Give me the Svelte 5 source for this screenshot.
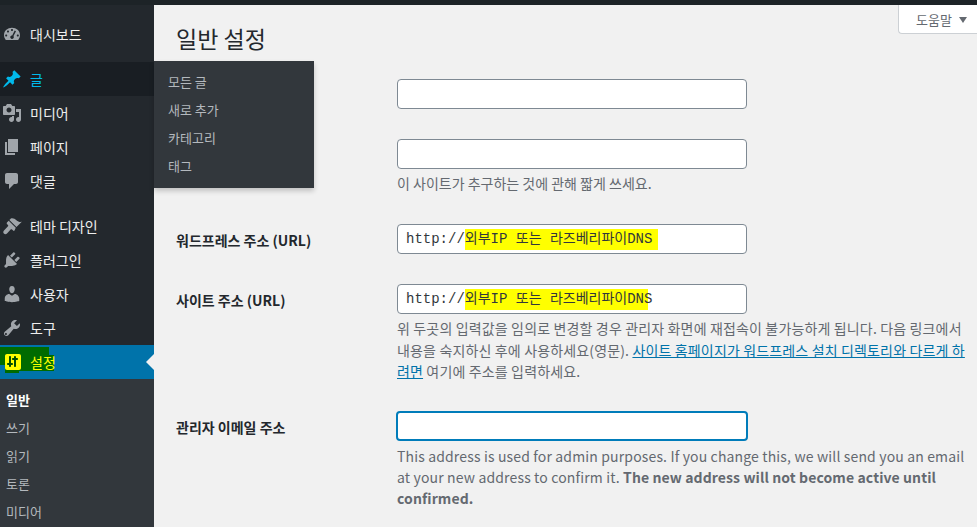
<script>
    const topMenu = [
        { label: "대시보드", icon: "dash" },
        { label: "글", icon: "pin", current: true },
        { label: "미디어", icon: "media" },
        { label: "페이지", icon: "page" },
        { label: "댓글", icon: "comment" },
        { label: "테마 디자인", icon: "brush", gap: true },
        { label: "플러그인", icon: "plug" },
        { label: "사용자", icon: "user" },
        { label: "도구", icon: "tool" }
    ];
    const paths = {
        dash: "M3.800 16h12.400c1.100-1.300 1.800-3 1.800-4.900 0-4.300-3.600-7.300-8-7.300s-8 3-8 7.300c0 1.900.7 3.600 1.800 4.900zM10 5c.6 0 1 .4 1 1s-.4 1-1 1-1-.4-1-1 .4-1 1-1zM6 6.500c.6 0 1 .4 1 1s-.4 1-1 1-1-.4-1-1 .4-1 1-1zM4.200 10.500c.6 0 1 .4 1 1s-.4 1-1 1-1-.4-1-1 .4-1 1-1zM15.800 10.500c.6 0 1 .4 1 1s-.4 1-1 1-1-.4-1-1 .4-1 1-1zM12.700 6.600l1.300.7-2.500 4.800c.3.400.4.900.3 1.400-.2 1-1.100 1.600-2.100 1.400-1-.2-1.600-1.100-1.400-2.100.2-.9 1-1.500 1.900-1.400z",
        pin: "M10.440 3.020l1.820-1.820 6.360 6.350-1.830 1.820c-1.050-.68-2.480-.57-3.410.36l-.75.75c-.92.93-1.040 2.350-.35 3.410l-1.830 1.820-2.410-2.410-2.800 2.790c-.42.42-3.380 2.710-3.800 2.290s1.860-3.390 2.280-3.810l2.790-2.790L4.100 9.360l1.830-1.820c1.050.69 2.480.57 3.400-.36l.75-.75c.93-.92 1.050-2.350.36-3.410z",
        media: "M13 11V4c0-.55-.45-1-1-1h-1.670L9 1H5L3.670 3H2c-.55 0-1 .45-1 1v7c0 .55.45 1 1 1h10c.55 0 1-.45 1-1zM7 4.500c1.380 0 2.500 1.120 2.500 2.500S8.380 9.500 7 9.500 4.500 8.380 4.500 7 5.620 4.500 7 4.500zM14 6h5v10.500c0 1.380-1.120 2.500-2.500 2.500S14 17.880 14 16.500s1.120-2.500 2.500-2.500c.17 0 .34.020.5.050V9h-3V6zm-4 8.050V13h2v3.500c0 1.380-1.120 2.500-2.500 2.500S7 17.880 7 16.500 8.120 14 9.500 14c.17 0 .34.020.5.050z",
        page: "M6 15V2h10v13H6zm-1 1h8v2H3V5h2v11z",
        comment: "M5 2h9c1.100 0 2 .9 2 2v7c0 1.100-.9 2-2 2h-2l-5 5v-5H5c-1.100 0-2-.9-2-2V4c0-1.100.9-2 2-2z",
        brush: "M14.480 11.060L7.410 3.990l1.500-1.500c.5-.56 2.300-.47 3.510.32 1.210.8 1.430 1.280 2.910 2.100 1.180.64 2.450 1.260 4.450.85zM13.770 11.770L6.700 4.700 4.930 6.470c-.39.39-.39 1.020 0 1.410l1.060 1.060c.39.39.39 1.030 0 1.420L2 14.500c-.9.9-.9 2.300-.1 3.100.8.8 2.200.8 3.100-.1l3.640-3.970c.39-.39 1.030-.39 1.420 0l1.060 1.060c.39.39 1.020.39 1.410 0z",
        plug: "M13.110 4.360L9.870 7.600 8 5.730l3.240-3.240c.35-.34 1.050-.2 1.560.32.52.51.66 1.210.31 1.550zm-8 1.770l.91-1.120 9.010 9.010-1.190.84c-.71.71-2.630 1.160-3.820 1.160H6.140L4.900 17.260c-.59.59-1.540.59-2.120 0-.59-.58-.59-1.530 0-2.120l1.240-1.240v-3.880c0-1.130.4-3.190 1.090-3.890zm7.260 3.970l3.240-3.240c.34-.35 1.040-.21 1.550.31.52.51.66 1.210.31 1.550l-3.240 3.250z",
        user: "M10 9.250c-2.270 0-2.730-3.440-2.730-3.440C7 4.020 7.820 2 9.970 2c2.160 0 2.980 2.020 2.710 3.810 0 0-.41 3.440-2.680 3.440zm0 2.570L12.720 10c2.390 0 4.520 2.330 4.520 4.530v2.490s-3.650 1.130-7.240 1.130c-3.650 0-7.240-1.130-7.240-1.130v-2.490c0-2.250 1.940-4.480 4.470-4.480z",
        tool: "M16.680 9.770c-1.340 1.340-3.300 1.670-4.950.99l-5.410 6.520c-.99.99-2.590.99-3.570 0-.99-.98-.99-2.580 0-3.570l6.520-5.420c-.68-1.650-.35-3.610.99-4.950 1.280-1.280 3.120-1.620 4.720-1.060l-2.890 2.890 2.820 2.820 2.860-2.860c.53 1.580.18 3.400-1.090 4.640zM4.660 15.340c-.39-.39-1.030-.39-1.420 0s-.39 1.030 0 1.420 1.030.39 1.420 0 .39-1.030 0-1.420z"
    };
    const settings = "M18 16V4c0-1.100-.9-2-2-2H4c-1.100 0-2 .9-2 2v12c0 1.100.9 2 2 2h12c1.100 0 2-.9 2-2zM8 11h1c.55 0 1 .45 1 1s-.45 1-1 1H8v1c0 .55-.45 1-1 1s-1-.45-1-1v-1H5c-.55 0-1-.45-1-1s.45-1 1-1h1V5c0-.55.45-1 1-1s1 .45 1 1v6zm7-4c0-.55-.45-1-1-1h-1V5c0-.55-.45-1-1-1s-1 .45-1 1v1h-1c-.55 0-1 .45-1 1s.45 1 1 1h1v6c0 .55.45 1 1 1s1-.45 1-1V8h1c.55 0 1-.45 1-1z";
    const submenu = ["일반", "쓰기", "읽기", "토론", "미디어"];
    const flyout = ["모든 글", "새로 추가", "카테고리", "태그"];
</script>

<div class="page">
    <div class="topbar"></div>
    <div class="main">
        <nav class="side">
            <ul class="menu">
                {#each topMenu as item}
                    <li class="item" class:current={item.current} class:gap={item.gap}>
                        <svg class="ico" viewBox="0 0 20 20"><path d={paths[item.icon]} fill-rule="evenodd" /></svg>
                        <span>{item.label}</span>
                    </li>
                {/each}
                <li class="item active">
                    <!-- painted-over marker from the screenshot -->
                    <svg class="blob" viewBox="0 0 54 30"><path d="M0 2h49v8h5v16H19v2H5v-8H0z" /></svg>
                    <svg class="ico" viewBox="0 0 20 20"><rect x="3" y="3" width="14" height="14" fill="#004d00" /><path d={settings} fill-rule="evenodd" /></svg>
                    <span class="sel">설정</span>
                    <i class="arrow"></i>
                </li>
            </ul>
            <ul class="sub">
                {#each submenu as s, i}
                    <li class:on={i === 0}>{s}</li>
                {/each}
            </ul>
            <ul class="flyout">
                {#each flyout as f}
                    <li>{f}</li>
                {/each}
            </ul>
        </nav>

        <section class="content">
            <div class="help">도움말<i class="caret"></i></div>
            <h1>일반 설정</h1>

            <div class="row first">
                <div class="field"><div class="input"></div></div>
            </div>
            <div class="row tag">
                <div class="field">
                    <div class="input"></div>
                    <p class="desc">이 사이트가 추구하는 것에 관해 짧게 쓰세요.</p>
                </div>
            </div>
            <div class="row wp">
                <label>워드프레스 주소 (URL)</label>
                <div class="field">
                    <div class="input mono">http://<mark class="long">외부IP 또는 라즈베리파이DNS</mark></div>
                </div>
            </div>
            <div class="row site">
                <label>사이트 주소 (URL)</label>
                <div class="field">
                    <div class="input mono">http://<mark>외부IP 또는 라즈베리파이DN</mark>S</div>
                    <p class="desc ko">위 두곳의 입력값을 임의로 변경할 경우 관리자 화면에 재접속이 불가능하게 됩니다. 다음 링크에서 내용을 숙지하신 후에 사용하세요(영문). <a href="#a">사이트 홈페이지가 워드프레스 설치 디렉토리와 다르게 하려면</a> 여기에 주소를 입력하세요.</p>
                </div>
            </div>
            <div class="row email">
                <label>관리자 이메일 주소</label>
                <div class="field">
                    <div class="input focus"></div>
                    <p class="desc en">This address is used for admin purposes. If you change this, we will send you an email at your new address to confirm it. <b>The new address will not become active until confirmed.</b></p>
                </div>
            </div>
        </section>
    </div>
</div>

<style>
    :global(body) {
        margin: 0;
        background: #f1f1f1;
    }

    .page {
        width: 977px;
        height: 527px;
        overflow: hidden;
        display: flex;
        flex-direction: column;
        font-family: "Noto Sans CJK KR", "Noto Sans", sans-serif;
        font-size: 14px;
        color: #23282d;
    }

    .topbar {
        height: 5px;
        flex: none;
        background: #1d2327;
    }

    .main {
        flex: 1;
        display: flex;
        min-height: 0;
    }

    ul {
        list-style: none;
        margin: 0;
        padding: 0;
    }

    .side {
        position: relative;
        width: 154px;
        flex: none;
        background: #23282d;
        color: #eee;
    }

    .menu {
        padding-top: 12px;
    }

    .item {
        position: relative;
        height: 34px;
        display: flex;
        align-items: center;
        gap: 8px;
        padding-left: 2px;
    }

    .item.gap {
        margin-top: 11px;
    }

    .ico {
        position: relative;
        width: 20px;
        height: 20px;
        fill: #a0a5aa;
        flex: none;
    }

    .item.current {
        background: #191e23;
        color: #00b9eb;
        margin-top: 11px;
    }

    .item.current .ico {
        fill: #00b9eb;
    }

    .item.active {
        background: #0073aa;
        color: #ff0;
    }

    .item.active .ico {
        fill: #ff0;
        left: 1px;
    }

    .blob {
        position: absolute;
        left: 0;
        top: 0;
        width: 54px;
        height: 30px;
        fill: #006b00;
    }

    .sel {
        position: relative;
    }

    .arrow {
        position: absolute;
        right: 0;
        top: 9px;
        border: 8px solid transparent;
        border-right-color: #f1f1f1;
        border-left-width: 0;
    }

    .sub {
        background: #32373c;
        padding: 7px 0 10px;
        height: 200px;
    }

    .sub li {
        height: 28px;
        line-height: 28px;
        padding-left: 6px;
        color: #b4b9be;
        font-size: 13px;
    }

    .sub li.on {
        color: #fff;
        font-weight: 700;
    }

    .flyout {
        position: absolute;
        left: 154px;
        top: 56px;
        width: 160px;
        height: 127px;
        box-sizing: border-box;
        padding: 7px 0 0 14px;
        background: #32373c;
        box-shadow: 0 3px 5px rgba(0, 0, 0, 0.2);
        color: #b4b9be;
        font-size: 13px;
        z-index: 2;
    }

    .flyout li {
        height: 28px;
        line-height: 28px;
    }

    .content {
        position: relative;
        flex: 1;
        min-width: 0;
        padding: 0 0 0 22px;
    }

    .help {
        position: absolute;
        right: 0;
        top: 0;
        width: 79px;
        height: 29px;
        box-sizing: border-box;
        padding-left: 17px;
        line-height: 29px;
        background: #fff;
        border: 1px solid #ccd0d4;
        border-top: 0;
        border-right: 0;
        border-radius: 0 0 0 4px;
        color: #646970;
        font-size: 13px;
    }

    .caret {
        display: inline-block;
        margin-left: 7px;
        border: 4px solid transparent;
        border-top: 6px solid #646970;
        border-bottom: 0;
        vertical-align: 2px;
    }

    h1 {
        margin: 0;
        padding-top: 16px;
        font-size: 23px;
        line-height: 34px;
        font-weight: 400;
    }

    .row {
        display: flex;
    }

    .row label {
        width: 221px;
        flex: none;
        padding-top: 6px;
        font-weight: 700;
        font-size: 14px;
        line-height: 20px;
    }

    .field {
        width: 572px;
    }

    .first,
    .tag {
        padding-left: 221px;
    }

    .first {
        margin-top: 24px;
    }

    .tag {
        margin-top: 30px;
    }

    .wp {
        margin-top: 30px;
    }

    .site {
        margin-top: 30px;
    }

    .email {
        margin-top: 28.5px;
    }

    .input {
        width: 350px;
        height: 30px;
        box-sizing: border-box;
        background: #fff;
        border: 1px solid #7e8993;
        border-radius: 4px;
    }

    .input.mono {
        padding: 0 8px;
        line-height: 28px;
        font-family: "Liberation Mono", "Noto Sans CJK KR", monospace;
        font-size: 14px;
        color: #32373c;
        white-space: nowrap;
    }

    .input.focus {
        width: 352px;
        margin-left: -1px;
        border: 2px solid #007cba;
    }

    mark {
        padding: 2px 4px 3px 0;
        margin-right: -4px;
        background: #ff0;
        color: inherit;
    }

    mark.long {
        padding-right: 6px;
    }

    .desc {
        margin: 4px 0 0;
        font-size: 14px;
        line-height: 21px;
        color: #646970;
    }

    .desc.ko {
        word-break: break-all;
        letter-spacing: 0.15px;
        line-height: 21.5px;
    }

    .desc.en {
        margin-top: 4.5px;
        letter-spacing: 0.15px;
    }

    .desc.en b {
        letter-spacing: 0.1px;
    }

    .desc a {
        color: #0073aa;
    }
</style>
